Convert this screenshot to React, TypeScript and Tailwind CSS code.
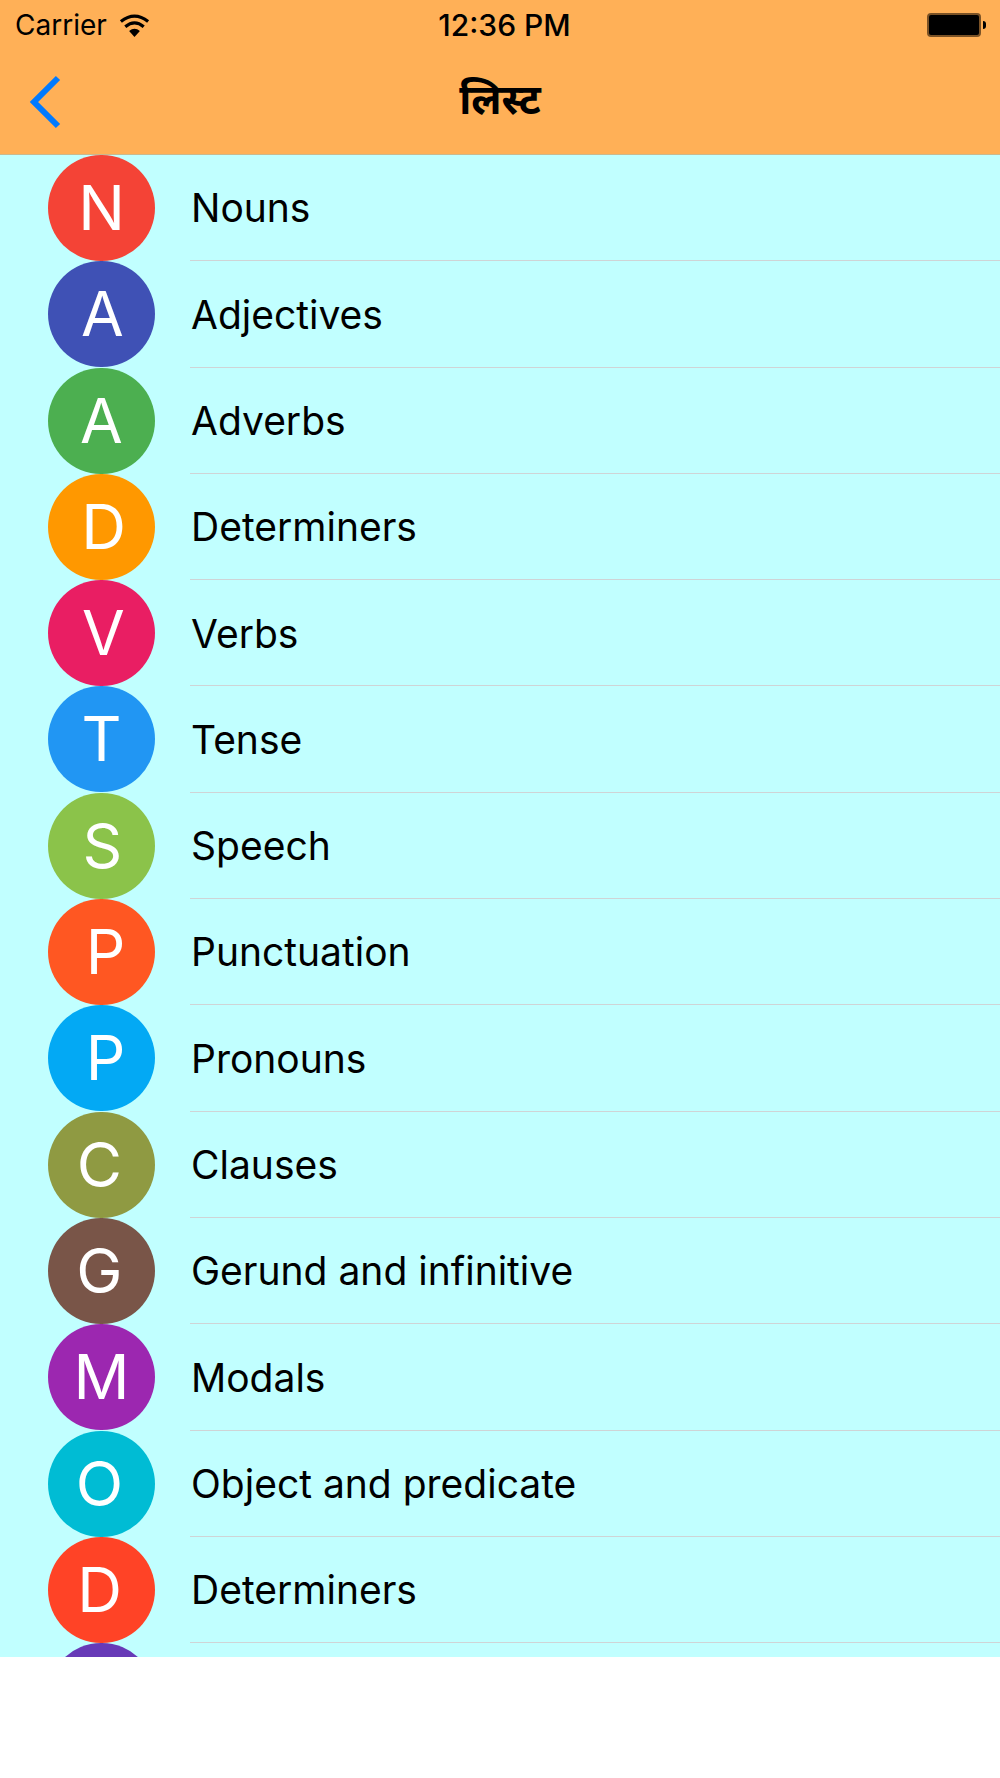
const items = [
  { letter: "N", label: "Nouns", color: "bg-[#f44336]", nudge: "" },
  { letter: "A", label: "Adjectives", color: "bg-[#3f51b5]", nudge: "translate-x-[1px]" },
  { letter: "A", label: "Adverbs", color: "bg-[#4caf50]", nudge: "" },
  { letter: "D", label: "Determiners", color: "bg-[#ff9800]", nudge: "translate-x-[2px]" },
  { letter: "V", label: "Verbs", color: "bg-[#e91e63]", nudge: "translate-x-[2px]" },
  { letter: "T", label: "Tense", color: "bg-[#2196f3]", nudge: "" },
  { letter: "S", label: "Speech", color: "bg-[#8bc34a]", nudge: "translate-x-[1px]" },
  { letter: "P", label: "Punctuation", color: "bg-[#ff5722]", nudge: "translate-x-[4px]" },
  { letter: "P", label: "Pronouns", color: "bg-[#03a9f4]", nudge: "translate-x-[4px]" },
  { letter: "C", label: "Clauses", color: "bg-[#8f9a42]", nudge: "-translate-x-[2px]" },
  { letter: "G", label: "Gerund and infinitive", color: "bg-[#795548]", nudge: "-translate-x-[2px]" },
  { letter: "M", label: "Modals", color: "bg-[#9c27b0]", nudge: "" },
  { letter: "O", label: "Object and predicate", color: "bg-[#00bcd4]", nudge: "-translate-x-[2px]" },
  { letter: "D", label: "Determiners", color: "bg-[#ff4326]", nudge: "-translate-x-[2px]" },
  { letter: "", label: "", color: "bg-[#673ab7]", nudge: "" },
];

const WifiIcon = () => (
  <svg width="31" height="23" viewBox="0 0 30 23" className="ml-[12px]">
    <path d="M15 23 L9.6 17 Q15 12.6 20.4 17 Z" fill="#000" />
    <path d="M5.8 12.8 Q15 5 24.2 12.8" fill="none" stroke="#000" strokeWidth="3.2" />
    <path d="M1.4 7.6 Q15 -3.4 28.6 7.6" fill="none" stroke="#000" strokeWidth="3.2" />
  </svg>
);

const BatteryIcon = () => (
  <div className="flex items-center gap-[2px]">
    <div className="h-[24px] w-[54px] rounded-[4px] border-2 border-[#7a5226] bg-black" />
    <div className="h-[8px] w-[3px] rounded-r-[3px] bg-black" />
  </div>
);

const Row = ({ item }: { item: (typeof items)[number] }) => (
  <div className="flex h-[106.3px] shrink-0 pl-[48px]">
    <div
      className={`flex h-[106px] w-[107px] shrink-0 items-center justify-center rounded-full text-[62px] leading-none text-white ${item.color}`}
    >
      <span className={item.nudge}>{item.letter}</span>
    </div>
    <div className="ml-[35px] flex h-full flex-1 items-center border-b border-[#cfd4d6] pl-[1px] pt-[2px] text-[39px] text-black">
      {item.label}
    </div>
  </div>
);

export default function App() {
  return (
    <div className="h-[1778px] w-[1000px] bg-white font-['Inter','Noto_Sans',sans-serif]">
      <div className="h-[155px] border-b border-[#c9b98f] bg-[#ffb057]">
        <div className="flex h-[50px] items-center justify-between pl-[15px] pr-[14px] text-black">
          <div className="flex w-[300px] items-center text-[28px]">
            Carrier
            <WifiIcon />
          </div>
          <div className="translate-x-[4px] text-[30px] font-medium">12:36 PM</div>
          <div className="flex w-[300px] justify-end">
            <BatteryIcon />
          </div>
        </div>
        <div className="relative flex h-[104px] items-center justify-center">
          <svg width="36" height="54" viewBox="0 0 36 54" className="absolute left-[28px] top-[25px]">
            <path d="M30 3 L6 27 L30 51" fill="none" stroke="#007aff" strokeWidth="6" />
          </svg>
          <span className="-translate-y-[2px] text-[41px] font-bold text-black">लिस्ट</span>
        </div>
      </div>
      <div className="flex h-[1502px] flex-col overflow-hidden bg-[#c1ffff]">
        {items.map((item, i) => (
          <Row key={i} item={item} />
        ))}
      </div>
    </div>
  );
}
